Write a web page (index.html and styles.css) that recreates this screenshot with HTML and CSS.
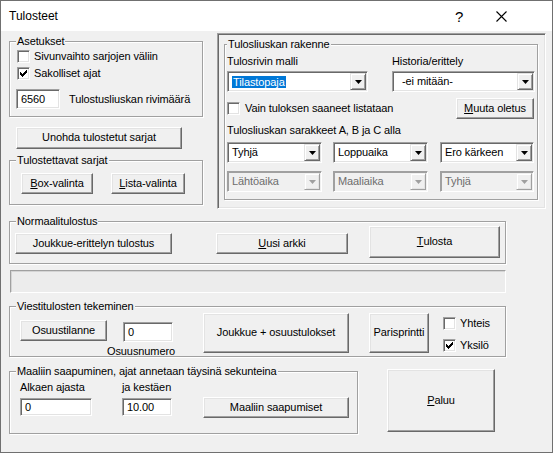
FILE: index.html
```html
<!DOCTYPE html>
<html lang="fi">
<head>
<meta charset="utf-8">
<title>Tulosteet</title>
<link rel="stylesheet" href="styles.css">
</head>
<body>
<div class="win">
  <div class="titlebar">
    <span class="title">Tulosteet</span>
    <span class="help">?</span>
    <span class="close"><svg width="11" height="11" viewBox="0 0 11 11"><path d="M0.5 0.5L10.5 10.5M10.5 0.5L0.5 10.5" stroke="#000" stroke-width="1.1" fill="none"/></svg></span>
  </div>
  <div class="client">
    <div class="top">
      <div class="leftcol">
        <fieldset class="grp g-aset">
          <legend>Asetukset</legend>
          <div class="aset-body">
            <div class="chk"><span class="cb"></span><span class="cbl">Sivunvaihto sarjojen väliin</span></div>
            <div class="chk chk2"><span class="cb"><svg width="7" height="7" viewBox="0 0 7 7"><path d="M6 0h1v1h-1zM5 1h2v1h-2zM0 2h1v1h-1zM4 2h3v1h-3zM0 3h2v1h-2zM3 3h3v1h-3zM0 4h5v1h-5zM1 5h3v1h-3zM2 6h1v1h-1z" fill="#000"/></svg></span><span class="cbl">Sakolliset ajat</span></div>
            <div class="numrow"><div class="field tb tb-rows">6560</div><span class="numlbl">Tulostusliuskan rivimäärä</span></div>
          </div>
        </fieldset>
        <button class="btn b-unohda">Unohda tulostetut sarjat</button>
        <fieldset class="grp g-sarjat">
          <legend>Tulostettavat sarjat</legend>
          <div class="sarjat-body">
            <button class="btn b-box"><u>B</u>ox-valinta</button>
            <button class="btn b-lista"><u>L</u>ista-valinta</button>
          </div>
        </fieldset>
      </div>
      <div class="panel">
        <fieldset class="grp g-rak">
          <legend>Tulosliuskan rakenne</legend>
          <div class="rak-body">
            <div class="rak-top">
              <div class="rcol rcol1">
                <div class="lbl">Tulosrivin malli</div>
                <div class="field combo"><span class="ctext"><span class="sel">Tilastopaja</span></span><span class="arrow"><svg width="7" height="4" viewBox="0 0 7 4"><path d="M0 0h7L3.5 4z" fill="#000"/></svg></span></div>
              </div>
              <div class="rcol rcol2">
                <div class="lbl">Historia/erittely</div>
                <div class="field combo"><span class="ctext ind">-ei mitään-</span><span class="arrow"><svg width="7" height="4" viewBox="0 0 7 4"><path d="M0 0h7L3.5 4z" fill="#000"/></svg></span></div>
              </div>
            </div>
            <div class="rak-mid">
              <span class="cb"></span><span class="cbl vain">Vain tuloksen saaneet listataan</span>
              <button class="btn b-muuta"><u>M</u>uuta oletus</button>
            </div>
            <div class="lbl lbl-cols">Tulosliuskan sarakkeet A, B ja C alla</div>
            <div class="combos c-row1">
              <div class="field combo cw1"><span class="ctext">Tyhjä</span><span class="arrow"><svg width="7" height="4" viewBox="0 0 7 4"><path d="M0 0h7L3.5 4z" fill="#000"/></svg></span></div>
              <div class="field combo cw2"><span class="ctext">Loppuaika</span><span class="arrow"><svg width="7" height="4" viewBox="0 0 7 4"><path d="M0 0h7L3.5 4z" fill="#000"/></svg></span></div>
              <div class="field combo cw3"><span class="ctext">Ero kärkeen</span><span class="arrow"><svg width="7" height="4" viewBox="0 0 7 4"><path d="M0 0h7L3.5 4z" fill="#000"/></svg></span></div>
            </div>
            <div class="combos c-row2">
              <div class="field combo dis cw1"><span class="ctext">Lähtöaika</span><span class="arrow"><svg width="7" height="4" viewBox="0 0 7 4"><path d="M0 0h7L3.5 4z" fill="#a0a0a0"/></svg></span></div>
              <div class="field combo dis cw2"><span class="ctext">Maaliaika</span><span class="arrow"><svg width="7" height="4" viewBox="0 0 7 4"><path d="M0 0h7L3.5 4z" fill="#a0a0a0"/></svg></span></div>
              <div class="field combo dis cw3"><span class="ctext">Tyhjä</span><span class="arrow"><svg width="7" height="4" viewBox="0 0 7 4"><path d="M0 0h7L3.5 4z" fill="#a0a0a0"/></svg></span></div>
            </div>
          </div>
        </fieldset>
      </div>
    </div>

    <fieldset class="grp g-normaali">
      <legend>Normaalitulostus</legend>
      <div class="norm-body">
        <button class="btn b-jouk">Joukkue-erittelyn tulostus</button>
        <button class="btn b-uusi"><u>U</u>usi arkki</button>
        <button class="btn b-tulosta"><u>T</u>ulosta</button>
      </div>
    </fieldset>

    <div class="progress"></div>

    <fieldset class="grp g-viesti">
      <legend>Viestitulosten tekeminen</legend>
      <div class="viesti-body">
        <button class="btn b-osuus">Osuustilanne</button>
        <div class="osuuscol">
          <div class="field tb tb-osuus">0</div>
          <div class="osuuslbl">Osuusnumero</div>
        </div>
        <button class="btn b-jo">Joukkue + osuustulokset</button>
        <button class="btn b-pari">Parisprintti</button>
        <div class="chkcol">
          <div class="chk c-yht"><span class="cb"></span><span class="cbl">Yhteis</span></div>
          <div class="chk c-yks"><span class="cb"><svg width="7" height="7" viewBox="0 0 7 7"><path d="M6 0h1v1h-1zM5 1h2v1h-2zM0 2h1v1h-1zM4 2h3v1h-3zM0 3h2v1h-2zM3 3h3v1h-3zM0 4h5v1h-5zM1 5h3v1h-3zM2 6h1v1h-1z" fill="#000"/></svg></span><span class="cbl">Yksilö</span></div>
        </div>
      </div>
    </fieldset>

    <div class="bottom">
      <fieldset class="grp g-maali">
        <legend>Maaliin saapuminen, ajat annetaan täysinä sekunteina</legend>
        <div class="maali-body">
          <div class="mcol mcol1">
            <div class="lbl">Alkaen ajasta</div>
            <div class="field tb tb-alk">0</div>
          </div>
          <div class="mcol mcol2">
            <div class="lbl">ja kestäen</div>
            <div class="field tb tb-kest">10.00</div>
          </div>
          <button class="btn b-maali">Maaliin saapumiset</button>
        </div>
      </fieldset>
      <button class="btn b-paluu"><u>P</u>aluu</button>
    </div>
  </div>
</div>
</body>
</html>
```
FILE: styles.css
```css
* { box-sizing: border-box; }
body { margin: 0; background: #fff; }

.win {
  width: 553px;
  height: 453px;
  border: 1px solid #707070;
  font: 11px/13px "Liberation Sans", Arial, sans-serif;
  letter-spacing: -0.1px;
  color: #000;
  display: flex;
  flex-direction: column;
  overflow: hidden;
}

.titlebar {
  flex: none;
  height: 30px;
  background: #fff;
  display: flex;
  align-items: center;
}
.title { flex: 1; margin-left: 8px; font-size: 12px; letter-spacing: 0; }
.help { width: 30px; text-align: center; font-size: 15px; }
.close { width: 40px; margin: 0 31px 0 7px; display: flex; justify-content: center; }
.close svg { display: block; }

.client { flex: 1; background: #f0f0f0; }

/* group boxes */
.grp {
  margin: 0;
  padding: 0;
  min-inline-size: 0;
  border: 1px solid #a0a0a0;
  box-shadow: inset 1px 1px 0 #fff, 1px 1px 0 #fff;
}
.grp > legend {
  margin-left: 6px;
  padding: 0 1px;
  height: 13px;
  line-height: 13px;
  background: #f0f0f0;
}

/* buttons */
.btn {
  display: flex;
  align-items: center;
  justify-content: center;
  padding: 0 0 1px 0;
  margin: 0;
  font: inherit;
  letter-spacing: inherit;
  color: #000;
  background: #f0f0f0;
  border: 1px solid;
  border-color: #fff #696969 #696969 #fff;
  box-shadow: inset -1px -1px 0 #a0a0a0, inset 1px 1px 0 #e3e3e3;
  flex: none;
}
.btn u { text-decoration: underline; text-underline-offset: 1px; }

/* sunken fields */
.field {
  background: #fff;
  border: 1px solid;
  border-color: #a0a0a0 #fff #fff #a0a0a0;
  box-shadow: inset 1px 1px 0 #696969, inset -1px -1px 0 #e3e3e3;
  flex: none;
}
.tb { display: flex; align-items: center; padding: 0 0 0 4px; }

/* checkboxes */
.chk { display: flex; align-items: center; height: 13px; }
.cb {
  flex: none;
  width: 13px;
  height: 13px;
  background: #fff;
  border: 1px solid;
  border-color: #a0a0a0 #fff #fff #a0a0a0;
  box-shadow: inset 1px 1px 0 #696969, inset -1px -1px 0 #e3e3e3;
  display: flex;
  align-items: center;
  justify-content: center;
}
.cb svg { display: block; }
.cbl { margin-left: 4px; white-space: nowrap; }

/* combos */
.combo { display: flex; align-items: stretch; padding: 1px; }
.ctext { flex: 1; display: flex; align-items: center; padding-left: 3px; white-space: nowrap; overflow: hidden; }
.ctext.ind { padding-left: 8px; }
.sel { background: #0078d7; color: #fff; padding: 0 1px; line-height: 12px; }
.arrow {
  flex: none;
  width: 16px;
  border: 1px solid;
  border-color: #e3e3e3 #696969 #696969 #e3e3e3;
  box-shadow: inset 1px 1px 0 #fff, inset -1px -1px 0 #a0a0a0;
  background: #f0f0f0;
  display: flex;
  align-items: center;
  justify-content: center;
}
.arrow svg { display: block; }
.combo.dis { background: #f0f0f0; color: #6d6d6d; border-color: #a0a0a0 #fff #fff #a0a0a0; box-shadow: inset 1px 1px 0 #a0a0a0, inset -1px -1px 0 #f0f0f0; }
.combo.dis .arrow { border-color: #f0f0f0 #a0a0a0 #a0a0a0 #f0f0f0; box-shadow: inset 1px 1px 0 #fff, inset -1px -1px 0 #e3e3e3; }

/* ---- top section ---- */
.top { display: flex; margin-top: 2px; }
.leftcol { margin-left: 8px; width: 194px; flex: none; }
.g-aset { margin-top: 2px; }
.aset-body { padding: 2px 0 7px 7px; }
.chk2 { margin-top: 4px; }
.numrow { display: flex; align-items: center; margin-top: 9px; margin-left: -1px; }
.tb-rows { width: 44px; height: 20px; }
.numlbl { margin-left: 9px; white-space: nowrap; }

.b-unohda { margin: 10px 0 0 7px; width: 166px; height: 22px; }
.g-sarjat { margin-top: 5px; }
.sarjat-body { display: flex; padding: 6px 0 10px 11px; }
.b-box { width: 72px; height: 21px; }
.b-lista { width: 74px; height: 21px; margin-left: 18px; }

.panel {
  flex: none;
  margin-left: 14px;
  width: 329px;
  height: 176px;
  border: 1px solid;
  border-color: #a0a0a0 #fff #fff #a0a0a0;
  box-shadow: inset 1px 1px 0 #696969, inset -1px -1px 0 #e3e3e3;
}
.g-rak { margin: 4px 0 0 6px; width: 314px; }
.g-rak > legend { margin-left: 2px; }
.rak-body { padding: 0 3px 7px 2px; }
.rak-top { display: flex; }
.lbl { line-height: 13px; margin-top: 4px; white-space: nowrap; }
.rak-top .combo { margin-top: 3px; height: 21px; }
.rcol1 { width: 141px; }
.rcol1 .combo { width: 141px; }
.rcol2 { width: 143px; margin-left: 24px; }
.rcol2 .combo { width: 143px; }
.rak-mid { display: flex; align-items: center; height: 21px; margin-top: 6px; }
.cbl.vain { margin-left: 5px; }
.b-muuta { margin-left: auto; width: 78px; height: 21px; }
.lbl-cols { margin-top: 5px; }
.combos { display: flex; }
.combos .combo { height: 21px; }
.c-row1 { margin-top: 5px; }
.c-row2 { margin-top: 8px; }
.cw1 { width: 95px; }
.cw2 { width: 95px; margin-left: 11px; }
.cw3 { width: 94px; margin-left: 12px; }

/* ---- Normaalitulostus ---- */
.g-normaali { margin: 6px 0 0 8px; width: 497px; }
.norm-body { display: flex; align-items: flex-start; margin-top: -2px; padding: 0 0 5px 5px; }
.b-jouk { margin-top: 7px; width: 157px; height: 21px; }
.b-uusi { margin: 7px 0 0 44px; width: 132px; height: 21px; }
.b-tulosta { margin-left: 21px; width: 131px; height: 32px; }

.progress {
  margin: 6px 0 0 9px;
  width: 496px;
  height: 23px;
  background: #ececec;
  border: 1px solid;
  border-color: #a0a0a0 #fff #fff #a0a0a0;
  box-shadow: inset 1px 1px 0 #d4d4d4;
}

/* ---- Viestitulosten ---- */
.g-viesti { margin: 7px 0 0 8px; width: 497px; }
.viesti-body { display: flex; align-items: flex-start; height: 43px; padding: 0 0 3px 10px; }
.b-osuus { margin-top: 7px; width: 87px; height: 21px; }
.osuuscol { width: 66px; flex: none; }
.tb-osuus { margin: 9px 0 0 16px; width: 50px; height: 20px; }
.osuuslbl { margin-top: 3px; line-height: 13px; white-space: nowrap; }
.b-jo { margin-left: 30px; width: 146px; height: 40px; }
.b-pari { margin-left: 20px; width: 60px; height: 40px; }
.chkcol { margin-left: 14px; }
.c-yht { margin-top: 4px; }
.c-yks { margin-top: 9px; }

/* ---- bottom ---- */
.bottom { display: flex; align-items: flex-start; margin-top: 8px; }
.g-maali { margin-left: 8px; width: 349px; flex: none; }
.maali-body { display: flex; align-items: flex-start; padding: 0 0 15px 10px; height: 55px; }
.mcol .lbl { margin-top: 3px; }
.mcol .tb { margin-top: 4px; height: 18px; }
.mcol1 .tb { width: 72px; }
.mcol2 { margin-left: 30px; }
.mcol2 .tb { width: 50px; }
.b-maali { margin: 19px 0 0 31px; width: 146px; height: 21px; }
.b-paluu { margin: 4px 0 0 29px; width: 108px; height: 63px; }
```
